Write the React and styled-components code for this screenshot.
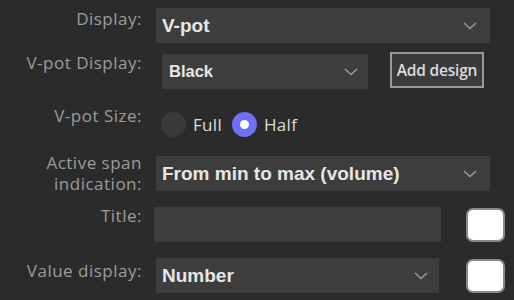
import React from "react";
import styled, { createGlobalStyle } from "styled-components";

const Global = createGlobalStyle`
  html, body { margin: 0; padding: 0; background: #2b2b2b; }
  body { font-family: "Open Sans", "Noto Sans", sans-serif; }
`;

const Panel = styled.div`
  width: 514px;
  height: 300px;
  background: #2b2b2b;
  display: flex;
  flex-direction: column;
  overflow: hidden;
`;

const Row = styled.div`
  display: flex;
  align-items: flex-start;
  margin-top: ${(p) => p.$mt}px;
  height: ${(p) => p.$h}px;
`;

const Label = styled.div`
  width: 142px;
  flex: none;
  text-align: right;
  color: #9c9c9c;
  font-family: "Open Sans", sans-serif;
  font-size: 17px;
  letter-spacing: 0.5px;
  line-height: ${(p) => p.$lh || 20}px;
  margin-top: ${(p) => p.$pt || 0}px;
`;

const SelectBox = styled.div`
  margin-left: ${(p) => p.$ml}px;
  margin-top: ${(p) => p.$mt || 0}px;
  width: ${(p) => p.$w}px;
  height: 35px;
  flex: none;
  background: #3d3d3d;
  display: flex;
  align-items: center;
  justify-content: space-between;
  padding: 0 ${(p) => p.$pr}px 0 ${(p) => p.$pl}px;
  box-sizing: border-box;
  color: #e6e6e6;
  font-family: "Liberation Sans", Arial, sans-serif;
  font-weight: bold;
  font-size: ${(p) => p.$fs || 19}px;
`;

const Chevron = () => (
  <svg width="14" height="8" viewBox="0 0 14 8" style={{ flex: "none" }}>
    <path d="M1 1 L7 6.5 L13 1" fill="none" stroke="#9a9a9a" strokeWidth="1.6" />
  </svg>
);

const Select = ({ value, ...rest }) => (
  <SelectBox {...rest}>
    <span>{value}</span>
    <Chevron />
  </SelectBox>
);

const Button = styled.div`
  margin-left: 22px;
  width: 94px;
  height: 36px;
  box-sizing: border-box;
  border: 2px solid #9a9a9a;
  background: #3a3a3a;
  color: #dcdcdc;
  font-family: "Open Sans", sans-serif;
  font-size: 15.5px;
  font-weight: 600;
  display: flex;
  align-items: center;
  justify-content: center;
  letter-spacing: -0.2px;
`;

const RadioGroup = styled.div`
  margin-left: 19px;
  margin-top: 2px;
  display: flex;
  align-items: center;
`;

const RadioCircle = styled.span`
  width: 25px;
  height: 25px;
  border-radius: 50%;
  background: ${(p) => (p.$on ? "#6f6ff7" : "#3a3a3a")};
  display: flex;
  align-items: center;
  justify-content: center;
  margin-right: 7px;
  &::after {
    content: "";
    display: ${(p) => (p.$on ? "block" : "none")};
    width: 9px;
    height: 9px;
    border-radius: 50%;
    background: #fff;
  }
`;

const RadioText = styled.span`
  color: #dcdcdc;
  font-size: 17px;
  letter-spacing: 0.3px;
  font-family: "Open Sans", sans-serif;
  margin-right: 10px;
`;

const TextInput = styled.div`
  margin-left: 12px;
  width: 287px;
  height: 35px;
  background: #3d3d3d;
  flex: none;
`;

const ColorBox = styled.div`
  margin-left: ${(p) => p.$ml}px;
  margin-top: ${(p) => p.$mt || 0}px;
  width: 39px;
  height: 34px;
  box-sizing: border-box;
  border-radius: 7px;
  background: #fff;
  border: 2px solid #8a8a8a;
  flex: none;
`;

export default function App() {
  return (
    <>
      <Global />
      <Panel>
        <Row $mt={8} $h={35}>
          <Label $pt={1}>Display:</Label>
          <Select value="V-pot" $ml={14} $w={334} $pl={6} $pr={13} />
        </Row>
        <Row $mt={9} $h={37}>
          <Label $pt={1}>V-pot Display:</Label>
          <Select value="Black" $ml={20} $mt={2} $w={206} $pl={7} $pr={10} $fs={16.5} />
          <Button>Add design</Button>
        </Row>
        <Row $mt={21} $h={26}>
          <Label $pt={-4}>V-pot Size:</Label>
          <RadioGroup>
            <RadioCircle />
            <RadioText>Full</RadioText>
            <RadioCircle $on />
            <RadioText>Half</RadioText>
          </RadioGroup>
        </Row>
        <Row $mt={18} $h={38}>
          <Label $lh={21} $pt={-2}>Active span indication:</Label>
          <Select value="From min to max (volume)" $ml={14} $mt={2} $w={334} $pl={6} $pr={13} />
        </Row>
        <Row $mt={15} $h={35}>
          <Label $pt={-1}>Title:</Label>
          <TextInput />
          <ColorBox $ml={25} $mt={1} />
        </Row>
        <Row $mt={16} $h={35}>
          <Label $pt={3}>Value display:</Label>
          <Select value="Number" $ml={14} $w={283} $pl={6} $pr={11} />
          <ColorBox $ml={27} $mt={1} />
        </Row>
      </Panel>
    </>
  );
}
